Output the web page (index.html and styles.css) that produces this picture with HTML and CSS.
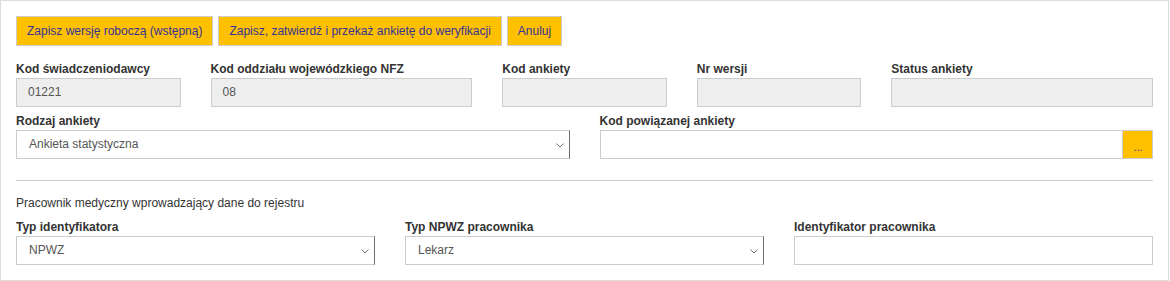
FILE: index.html
```html
<!DOCTYPE html>
<html lang="pl">
<head>
<meta charset="utf-8">
<title>Ankieta</title>
<link rel="stylesheet" href="styles.css">
</head>
<body>
<div class="panel">
  <div class="actions">
    <button class="btn" type="button">Zapisz wersję roboczą (wstępną)</button>
    <button class="btn" type="button">Zapisz, zatwierdź i przekaż ankietę do weryfikacji</button>
    <button class="btn" type="button">Anuluj</button>
  </div>

  <div class="grid row-first">
    <div class="field span2">
      <label class="lbl">Kod świadczeniodawcy</label>
      <div class="input disabled">01221</div>
    </div>
    <div class="field span3">
      <label class="lbl">Kod oddziału wojewódzkiego NFZ</label>
      <div class="input disabled">08</div>
    </div>
    <div class="field span2">
      <label class="lbl">Kod ankiety</label>
      <div class="input disabled"></div>
    </div>
    <div class="field span2">
      <label class="lbl">Nr wersji</label>
      <div class="input disabled"></div>
    </div>
    <div class="field span3">
      <label class="lbl">Status ankiety</label>
      <div class="input disabled"></div>
    </div>
  </div>

  <div class="grid row">
    <div class="field span6">
      <label class="lbl">Rodzaj ankiety</label>
      <div class="select">
        <span class="select-text">Ankieta statystyczna</span>
        <svg class="chev" width="8" height="5" viewBox="0 0 8 5"><path d="M0.5 0.5 L4 4 L7.5 0.5" fill="none" stroke="#6b6b6b" stroke-width="1"/></svg>
      </div>
    </div>
    <div class="field span6">
      <label class="lbl">Kod powiązanej ankiety</label>
      <div class="input-group">
        <div class="input grow"></div>
        <button class="addon" type="button">...</button>
      </div>
    </div>
  </div>

  <hr class="sep">

  <div class="section-title">Pracownik medyczny wprowadzający dane do rejestru</div>

  <div class="grid row-last">
    <div class="field span4">
      <label class="lbl">Typ identyfikatora</label>
      <div class="select">
        <span class="select-text">NPWZ</span>
        <svg class="chev" width="8" height="5" viewBox="0 0 8 5"><path d="M0.5 0.5 L4 4 L7.5 0.5" fill="none" stroke="#6b6b6b" stroke-width="1"/></svg>
      </div>
    </div>
    <div class="field span4">
      <label class="lbl">Typ NPWZ pracownika</label>
      <div class="select">
        <span class="select-text">Lekarz</span>
        <svg class="chev" width="8" height="5" viewBox="0 0 8 5"><path d="M0.5 0.5 L4 4 L7.5 0.5" fill="none" stroke="#6b6b6b" stroke-width="1"/></svg>
      </div>
    </div>
    <div class="field span4">
      <label class="lbl">Identyfikator pracownika</label>
      <div class="input"></div>
    </div>
  </div>
</div>
</body>
</html>
```

FILE: styles.css
```css
html, body {
  margin: 0;
  padding: 0;
  background: #ffffff;
}

body {
  font-family: "Liberation Sans", Arial, sans-serif;
  font-size: 12px;
  color: #333333;
}

.panel {
  box-sizing: border-box;
  width: 1169px;
  border: 1px solid #dddddd;
  padding: 15px;
}

.actions {
  display: flex;
  gap: 5px;
}

.btn {
  height: 30px;
  box-sizing: border-box;
  padding: 0 10px;
  background: #ffc000;
  border: 1px solid #cccccc;
  color: #333399;
  font-family: "Liberation Sans", Arial, sans-serif;
  font-size: 12px;
  cursor: pointer;
}

.grid {
  display: grid;
  grid-template-columns: repeat(12, 1fr);
  column-gap: 30px;
}

.row-first {
  margin-top: 15px;
}

.row {
  margin-top: 6px;
}

.row-last {
  margin-top: 7px;
}

.span2 { grid-column: span 2; }
.span3 { grid-column: span 3; }
.span4 { grid-column: span 4; }
.span6 { grid-column: span 6; }

.field {
  display: flex;
  flex-direction: column;
  min-width: 0;
}

.lbl {
  display: block;
  font-weight: bold;
  line-height: 17px;
  height: 17px;
  color: #333333;
}

.input {
  box-sizing: border-box;
  height: 29px;
  border: 1px solid #cccccc;
  background: #ffffff;
  color: #555555;
  padding: 0 11px;
  line-height: 27px;
}

.input.disabled {
  background: #eeeeee;
}

.input-group {
  display: flex;
}

.grow {
  flex: 1;
  min-width: 0;
}

.addon {
  box-sizing: border-box;
  width: 31px;
  height: 29px;
  margin-left: -1px;
  border: 1px solid #cccccc;
  background: #ffc000;
  color: #333399;
  font-family: "Liberation Sans", Arial, sans-serif;
  font-size: 11px;
  padding: 4px 0 0 1px;
  line-height: 20px;
}

.select {
  box-sizing: border-box;
  height: 29px;
  display: flex;
  align-items: center;
  justify-content: space-between;
  border: 1px solid #cccccc;
  border-right-color: #6e6e6e;
  background: #ffffff;
  color: #555555;
  padding: 0 5px 0 12px;
}

.select-text {
  line-height: 27px;
}

.chev {
  display: block;
  margin-top: 1px;
}

.sep {
  margin: 21px 0 0 0;
  border: 0;
  border-top: 1px solid #cccccc;
  height: 0;
}

.section-title {
  margin-top: 14px;
  line-height: 17px;
  color: #333333;
}
```
